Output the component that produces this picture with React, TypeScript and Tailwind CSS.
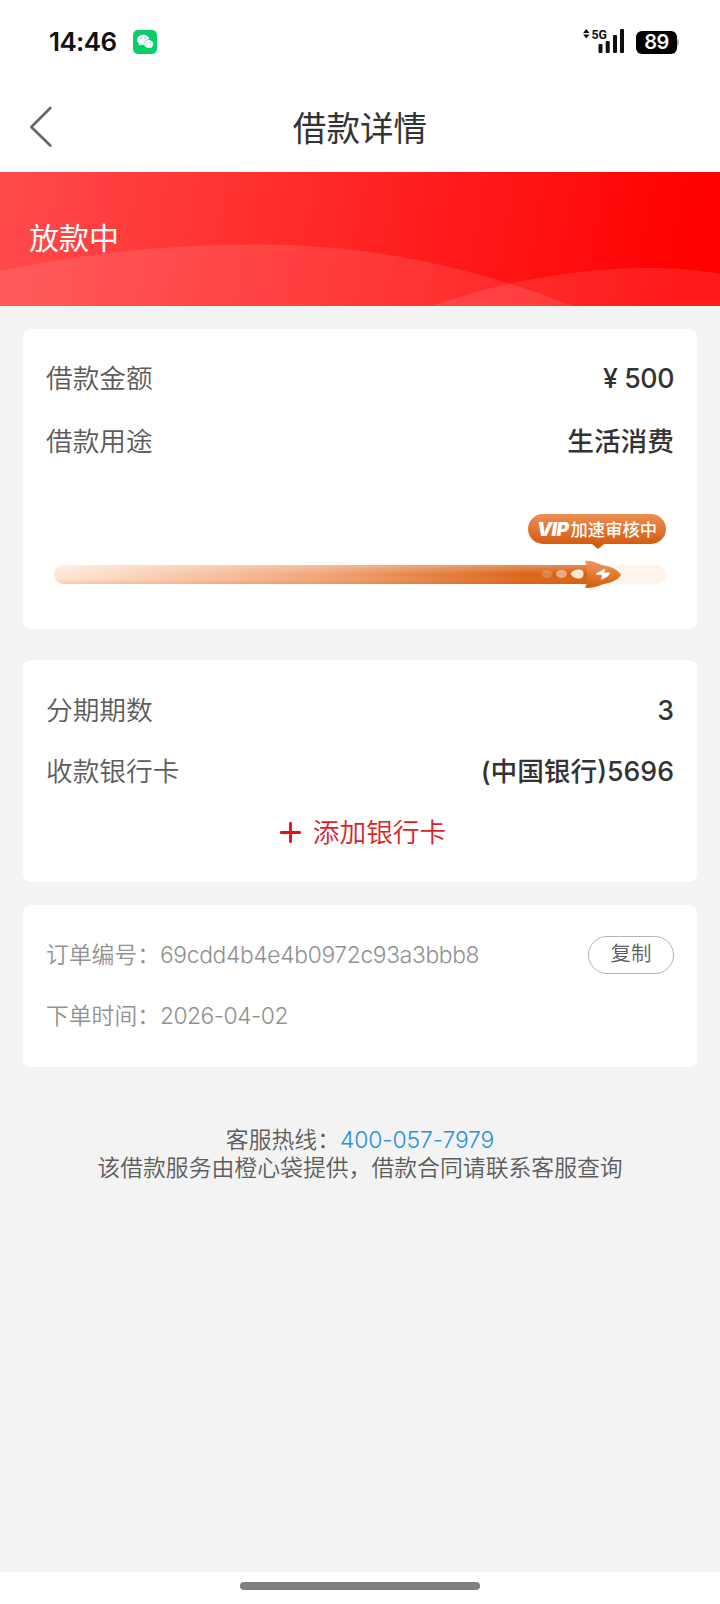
import type { ReactNode } from "react"

interface RowProps {
  label: string
  children: ReactNode
}

function StatusBar() {
  return (
    <div className="flex h-[84px] items-center justify-between pl-[49px] pr-[41px]">
      <div className="flex items-center">
        <span className="-mt-px w-[84px] text-[26px] leading-none font-semibold tracking-[-0.6px] whitespace-nowrap text-[#111]">14:46</span>
        <svg className="h-6 w-6" viewBox="0 0 24 24">
          <rect width="24" height="24" rx="5" fill="#07cf68" />
          <path d="M10.500 4.800c-3.600 0-6.400 2.200-6.400 5 0 1.600.9 3 2.200 3.900l-.5 2 2.200-1.200c.8.2 1.600.4 2.400.4h.5c-.6-3.200 2-5.700 5.600-5.700C15.500 6.600 13.300 4.800 10.500 4.800z" fill="#fff" />
          <path d="M20.400 13.900c0-2.300-2.200-4-4.700-4s-4.700 1.700-4.700 4 2.200 4 4.700 4c.6 0 1.100-.1 1.700-.3l1.600.9-.4-1.400c1.100-.8 1.800-1.900 1.800-3.200z" fill="#fff" />
          <circle cx="8.200" cy="8.500" r=".7" fill="#07cf68" />
          <circle cx="12.300" cy="8.500" r=".7" fill="#07cf68" />
          <circle cx="14.100" cy="12.700" r=".55" fill="#07cf68" />
          <circle cx="17.300" cy="12.700" r=".55" fill="#07cf68" />
        </svg>
      </div>
      <div className="flex items-center gap-3">
        <svg className="-mt-0.5 h-6 w-[41px] overflow-visible" viewBox="0 0 41 24">
          <path d="M3.300 0 6.500 4H.100zM3.300 9.500 6.500 5.500H.100z" fill="#111" />
          <text x="8.500" y="10" fontSize="13.500" fontWeight="700" fontFamily="Roboto" textLength="15.500" lengthAdjust="spacingAndGlyphs" fill="#111">5G</text>
          <rect x="15.500" y="15" width="4" height="9" rx="1" fill="#111" />
          <rect x="22.700" y="12" width="4" height="12" rx="1" fill="#111" />
          <rect x="30" y="6" width="4" height="18" rx="1" fill="#111" />
          <rect x="37" y="0" width="4" height="24" rx="1" fill="#111" />
        </svg>
        <div className="flex items-center">
          <div className="flex h-[23px] w-[41px] items-center justify-center rounded-md bg-black text-[20px] font-semibold tracking-[-0.5px] text-white">89</div>
          <div className="h-[7px] w-[2px] rounded-r-sm bg-[#b5b5b5]" />
        </div>
      </div>
    </div>
  )
}

function Header() {
  return (
    <div className="grid h-[88px] grid-cols-[100px_1fr_100px] items-center">
      <svg className="-mt-[3px] ml-[29px] h-[42px] w-6" viewBox="0 0 24 42" fill="none" stroke="#666" strokeWidth="2.600" strokeLinecap="round" strokeLinejoin="round">
        <path d="M21.300 2 2.300 21l19 18.500" />
      </svg>
      <h1 className="pt-px text-center text-[33.600px] leading-none text-[#333]">借款详情</h1>
    </div>
  )
}

function StatusBanner() {
  return (
    <div className="relative flex h-[134px] items-center bg-[linear-gradient(100deg,#ff4b4b_0%,#ff0000_96%)] px-[29px]">
      <svg className="absolute inset-0 h-full w-full" viewBox="0 0 720 134">
        <path d="M0 99C80 82 165 72.500 257 72.500c115 0 215 22.500 316 61.500H0z" fill="#fff" fillOpacity=".1" />
        <path d="M432 134c72-26 149-38 218-38 25 0 48 2 70 6v32z" fill="#fff" fillOpacity=".1" />
      </svg>
      <span className="relative -mt-0.5 text-[30px] leading-none text-white">放款中</span>
    </div>
  )
}

function Row({ label, children }: RowProps) {
  return (
    <div className="flex items-center justify-between text-[26.700px] leading-[40px]">
      <span className="font-[350] text-[#5c5c5c]">{label}</span>
      <span className="font-medium text-[#333]">{children}</span>
    </div>
  )
}

function ReviewProgress() {
  return (
    <div className="relative mx-2 mt-[53px] h-[76px]">
      <div className="ml-auto flex h-[30px] w-[138px] items-center justify-center gap-0.5 rounded-full bg-linear-to-b from-[#ec8f51] to-[#d65b0a] text-white">
        <span className="text-[19px] leading-none font-black italic tracking-[-0.5px]">VIP</span>
        <span className="pt-0.5 text-[17.300px] leading-none font-medium">加速审核中</span>
      </div>
      <svg className="absolute top-[29.500px] left-[538px] h-[5px] w-3" viewBox="0 0 12 5">
        <path d="M0 0h12L7 4.300q-1 .7-2 0z" fill="#d65b0a" />
      </svg>
      <svg className="mt-4 h-[29px] w-full" viewBox="0 0 612 29">
        <defs>
          <linearGradient id="trail" gradientUnits="userSpaceOnUse" x1="0" x2="545" y1="0" y2="0">
            <stop offset="0" stopColor="#ffe8d9" />
            <stop offset=".5" stopColor="#f0a376" />
            <stop offset=".85" stopColor="#d96518" />
            <stop offset="1" stopColor="#d65b0a" />
          </linearGradient>
          <linearGradient id="shade" x1="0" x2="0" y1="0" y2="1">
            <stop offset="0" stopColor="#fff" stopOpacity=".3" />
            <stop offset=".5" stopColor="#fff" stopOpacity="0" />
            <stop offset="1" stopColor="#e85c00" stopOpacity=".2" />
          </linearGradient>
          <linearGradient id="rocket" x1="0" x2="0" y1="0" y2="1">
            <stop offset="0" stopColor="#ee9961" />
            <stop offset="1" stopColor="#d65b0a" />
          </linearGradient>
        </defs>
        <rect y="5" width="612" height="19" rx="9.500" fill="#fff4eb" />
        <path d="M9.500 5H545v19H9.500a9.500 9.500 0 0 1 0-19z" fill="url(#trail)" />
        <path d="M9.500 5H545v19H9.500a9.500 9.500 0 0 1 0-19z" fill="url(#shade)" />
        <ellipse cx="493" cy="14" rx="5.500" ry="4" fill="#fff" fillOpacity=".2" />
        <ellipse cx="507.500" cy="14" rx="5.500" ry="4" fill="#fff" fillOpacity=".45" />
        <path d="M516.500 14c2-3.500 5-4.500 8-4.500 4 0 5 2 5 4.500s-1 4.500-5 4.500c-3 0-6-1-8-4.500z" fill="#fff" fillOpacity=".85" />
        <path d="M531 .8c5-.5 12 1.700 17 4.200 9 1.500 16 4.500 19 10-3 5-10 8-19 9.500-5 2.500-12 3.800-17 3.300 1.500-3 2-6 2-12.800 0-6-.5-11-2-14.200z" fill="url(#rocket)" />
        <path d="m542 14 9-5-1.500 4h6l-1.500 2.800-6.500 3.500 1.200-4.300z" fill="#fff" stroke="#fff" strokeWidth=".8" strokeLinejoin="round" />
      </svg>
    </div>
  )
}

export default function App() {
  return (
    <div className="flex h-[1604px] w-[720px] flex-col bg-[#f3f3f3] font-['Inter','Noto_Sans_CJK_SC',sans-serif]">
      <div className="bg-white">
        <StatusBar />
        <Header />
      </div>
      <StatusBanner />

      <main className="flex-1 px-[23px] pt-[23px]">
        <section className="h-[300px] rounded-lg bg-white px-[23px] pt-[29px]">
          <Row label="借款金额"><span className="tracking-[-0.4px]">¥ 500</span></Row>
          <div className="mt-[23px]">
            <Row label="借款用途">生活消费</Row>
          </div>
          <ReviewProgress />
        </section>

        <section className="mt-[31px] h-[222px] rounded-lg bg-white px-[23px] pt-[30px]">
          <Row label="分期期数">3</Row>
          <div className="mt-[21px]">
            <Row label="收款银行卡">(中国银行)5696</Row>
          </div>
          <button className="mx-auto mt-[21px] flex h-10 items-center gap-3 pl-[6px] text-[26.700px] leading-none font-[350] text-[#d8232a]">
            <svg className="h-[21px] w-[21px]" viewBox="0 0 21 21" stroke="#e3101b" strokeWidth="2.800" strokeLinecap="round">
              <path d="M10.500 1.300v18.400M1.300 10.500h18.400" />
            </svg>
            添加银行卡
          </button>
        </section>

        <section className="mt-[23px] h-[162px] rounded-lg bg-white px-[23px] pt-[31px] text-[22.800px] font-[350] text-[#919191]">
          <div className="flex h-[38px] items-center justify-between">
            <span className="flex">订单编号：<span className="tracking-[-0.330px]">69cdd4b4e4b0972c93a3bbb8</span></span>
            <button className="h-[38px] w-[86px] rounded-full border border-[#b5b5b5] pb-px text-[20.500px] leading-none text-[#5c5c5c]">复制</button>
          </div>
          <div className="mt-[23px] flex h-[38px] items-center">
            下单时间：<span className="tracking-[-0.500px]">2026-04-02</span>
          </div>
        </section>

        <div className="mt-[59px] text-center text-[22.850px] leading-[28px] font-[350] text-[#5c5c5c]">
          <p>客服热线：<a className="tracking-[-0.100px] text-[#2b8fdb]">400-057-7979</a></p>
          <p>该借款服务由橙心袋提供，借款合同请联系客服查询</p>
        </div>
      </main>

      <div className="flex h-8 justify-center bg-white pt-[10px]">
        <div className="h-2 w-60 rounded-full bg-[#808080]" />
      </div>
    </div>
  )
}
